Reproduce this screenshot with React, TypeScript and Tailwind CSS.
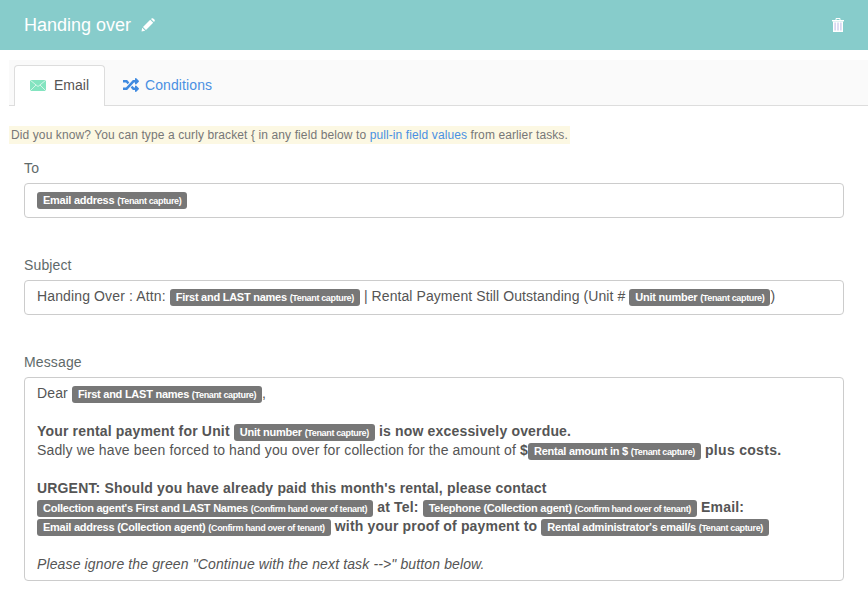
import React from "react";
import { FaRandom } from "react-icons/fa";

function Chip({ name, src }: { name: string; src: string }) {
  return (
    <span className="-my-px inline-block h-[17px] rounded-[3px] bg-[#777777] px-[6px] align-baseline text-[11px] leading-[17px] font-bold tracking-[-0.25px] whitespace-nowrap text-white not-italic">
      {name} <span className="text-[9px] tracking-[-0.35px]">({src})</span>
    </span>
  );
}

function Pencil() {
  return (
    <svg width="14" height="14" viewBox="0 0 14 14" className="fill-white">
      <path d="M0.5 13.5 L1.2 9.8 L4.2 12.8 Z M2 9 L9.2 1.8 L12.2 4.8 L5 12 Z M10 1 L11 0.3 Q11.6 0 12.2 0.4 L13.6 1.8 Q14 2.4 13.7 3 L13 4 Z" />
    </svg>
  );
}

function Trash() {
  return (
    <svg width="12" height="14" viewBox="0 0 12 14">
      <path d="M4 2 V0.5 H8 V2" fill="none" stroke="#fff" strokeWidth="1" />
      <rect x="0" y="2" width="12" height="1.4" fill="#fff" />
      <rect x="1" y="3.4" width="10" height="10.6" fill="#fff" />
      <rect x="2.5" y="4.5" width="1.2" height="8" fill="#c9c6ea" />
      <rect x="5.4" y="4.5" width="1.2" height="8" fill="#c9c6ea" />
      <rect x="8.3" y="4.5" width="1.2" height="8" fill="#c9c6ea" />
    </svg>
  );
}

function Mail() {
  return (
    <svg width="16" height="11" viewBox="0 0 16 11">
      <rect width="16" height="11" fill="#84e4c0" />
      <path d="M0 0 L8 6.5 L16 0 M0 11 L6 5 M16 11 L10 5" fill="none" stroke="#d4f5e8" strokeWidth="1" />
    </svg>
  );
}

function Field({ label, children }: { label: string; children: React.ReactNode }) {
  return (
    <div>
      <div className="mb-[5px] h-[20px] leading-[20px] tracking-[0.13px] text-[#5f6a6a]">{label}</div>
      {children}
    </div>
  );
}

const box = "rounded-[4px] border border-[#cccccc] bg-white px-[12px] text-[#555555] tracking-[0.13px]";
const strong = "font-bold tracking-[0.17px]";

export default function App() {
  return (
    <div className="h-[610px] overflow-hidden bg-white font-['Liberation_Sans',Arial,sans-serif] text-[14px] text-[#555555]">
      <header className="flex h-[50px] items-center justify-between bg-[#87cccb] pr-[24px] pl-[24px]">
        <div className="flex items-center gap-[10px] text-white">
          <span className="text-[18px]">Handing over</span>
          <Pencil />
        </div>
        <Trash />
      </header>

      <div className="mt-[10px] ml-[9px] flex h-[46px] items-end border-b border-[#dddddd] bg-[#fafafa] pl-[5px]">
        <div className="-mb-px flex h-[41px] w-[91px] items-center gap-[8px] rounded-t-[4px] border border-b-0 border-[#dddddd] bg-white pb-[1px] pl-[15px]">
          <Mail />
          <span>Email</span>
        </div>
        <div className="flex h-[41px] items-center gap-[6px] pt-[1px] pl-[18px] tracking-[0.1px] text-[#4a90e2]">
          <FaRandom className="text-[16px] text-[#3f8ae0]" />
          <span>Conditions</span>
        </div>
      </div>

      <div className="mt-[20px] ml-[9px] flex">
        <div className="h-[18px] bg-[#fcf8e3] px-[2px] text-[12px] leading-[18px] tracking-[0.105px] text-[#777777]">
          Did you know? You can type a curly bracket {"{"} in any field below to{" "}
          <span className="text-[#4a90e2]">pull-in field values</span> from earlier tasks.
        </div>
      </div>

      <div className="mt-[14px] ml-[24px] flex w-[820px] flex-col gap-[37px]">
        <Field label="To">
          <div className={`${box} flex h-[35px] items-center`}>
            <Chip name="Email address" src="Tenant capture" />
          </div>
        </Field>
        <Field label="Subject">
          <div className={`${box} h-[35px] leading-[31px] whitespace-nowrap`}>
            Handing Over : Attn: <Chip name="First and LAST names" src="Tenant capture" /><span className="tracking-[0.08px]"> | Rental Payment Still Outstanding (Unit # </span><Chip name="Unit number" src="Tenant capture" />)
          </div>
        </Field>
        <Field label="Message">
          <div className={`${box} h-[204px] pt-[6px] leading-[19px]`}>
            <div>Dear <Chip name="First and LAST names" src="Tenant capture" />,</div>
            <div className="h-[19px]" />
            <div className={strong}>Your rental payment for Unit <Chip name="Unit number" src="Tenant capture" /> is now excessively overdue.</div>
            <div>Sadly we have been forced to hand you over for collection for the amount of <b>$</b><Chip name="Rental amount in $" src="Tenant capture" /> <b className="tracking-[0.3px]">plus costs.</b></div>
            <div className="h-[19px]" />
            <div className={strong}>URGENT: Should you have already paid this month's rental, please contact</div>
            <div className={strong}><Chip name="Collection agent's First and LAST Names" src="Confirm hand over of tenant" /> at Tel: <Chip name="Telephone (Collection agent)" src="Confirm hand over of tenant" /> Email:</div>
            <div className={strong}><Chip name="Email address (Collection agent)" src="Confirm hand over of tenant" /> with your proof of payment to <Chip name="Rental administrator's email/s" src="Tenant capture" /></div>
            <div className="h-[19px]" />
            <div className="italic">Please ignore the green "Continue with the next task --&gt;" button below.</div>
          </div>
        </Field>
      </div>
    </div>
  );
}
